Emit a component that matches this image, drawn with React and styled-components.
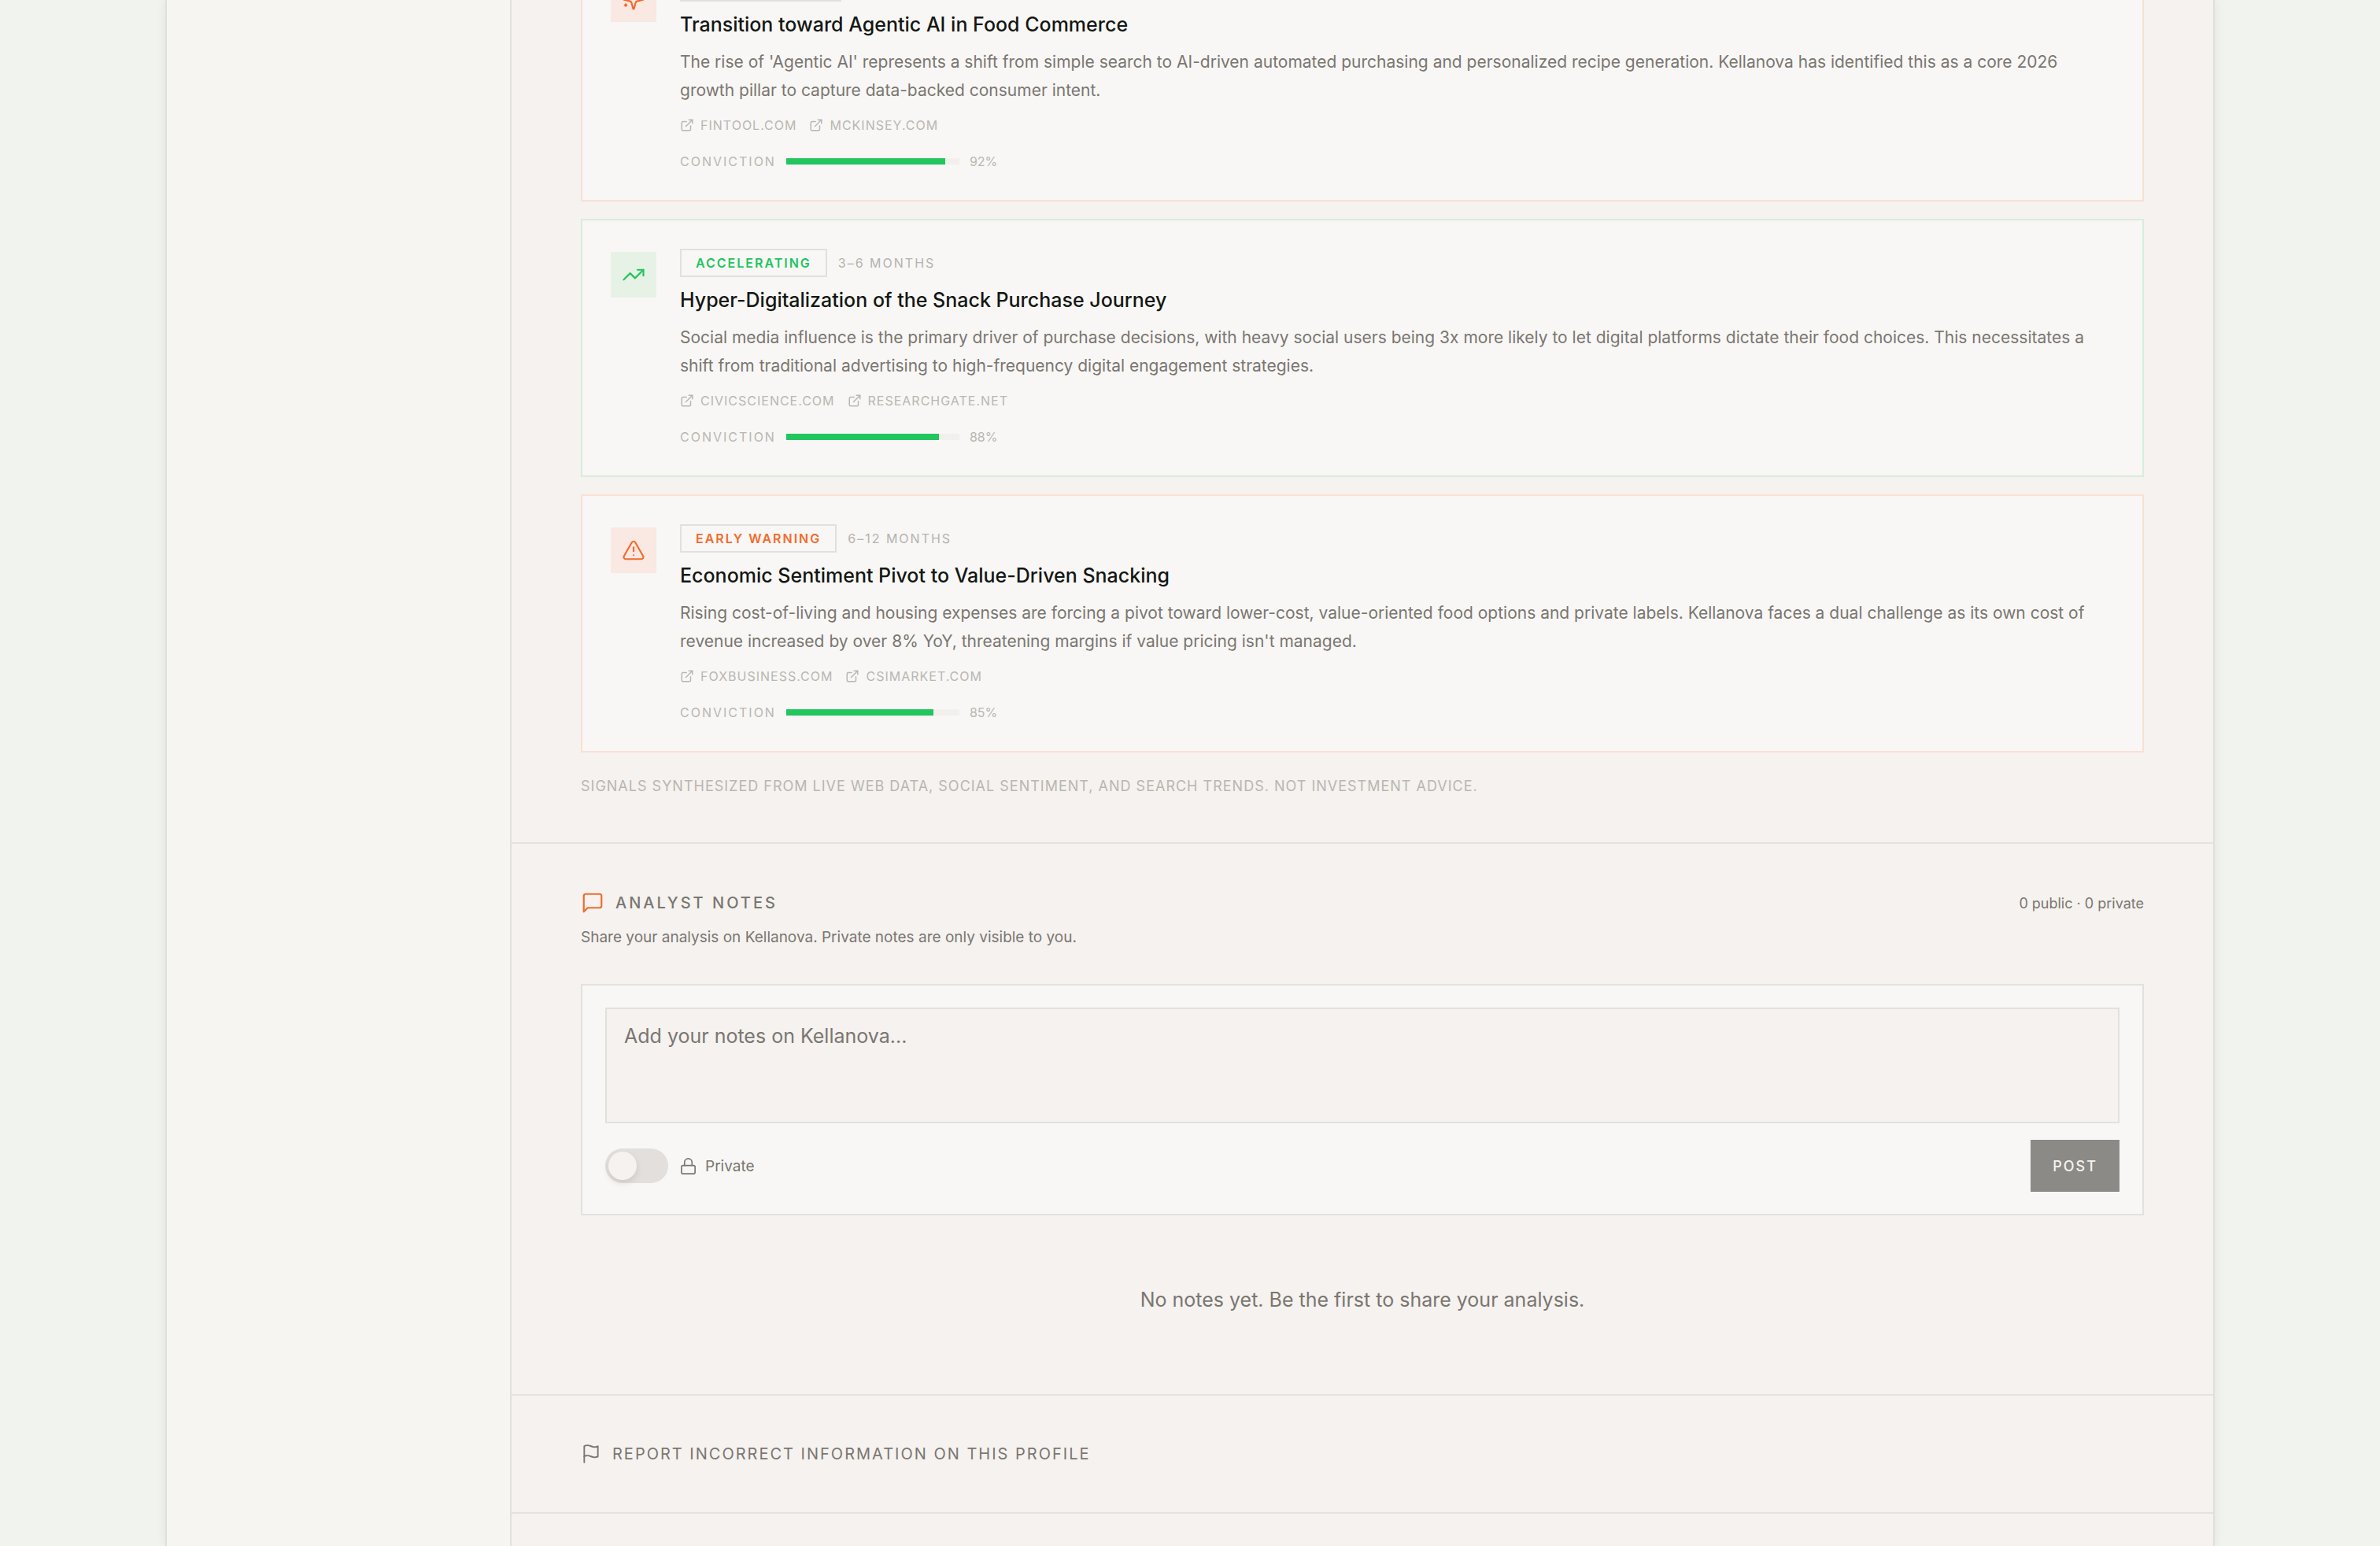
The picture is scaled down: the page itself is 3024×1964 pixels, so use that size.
import React, { useState } from 'react';
import styled, { createGlobalStyle } from 'styled-components';
import { TrendingUp, TriangleAlert, ExternalLink, Lock } from 'lucide-react';

const GlobalStyle = createGlobalStyle`
    *, *::before, *::after {
        box-sizing: border-box;
    }
    body {
        margin: 0;
        background: #f1f3ee;
        color: #141714;
        font-family: Inter, "Liberation Sans", sans-serif;
    }
    h2, h3, p {
        margin: 0;
        font-weight: 400;
    }
    button, textarea {
        font-family: inherit;
    }
`;

const Shell = styled.div`
    display: flex;
    max-width: 2604px;
    min-height: 100vh;
    margin: 0 auto;
    overflow: hidden;
    border: 0 solid #dfe0db;
    border-width: 0 2px;
    background: #f5f2ef;
    box-shadow: 0 0 12px rgba(40, 60, 40, 0.08);
`;

const Sidebar = styled.aside`
    flex: 0 0 438px;
    border-right: 2px solid #e3e1dd;
    background: #f6f5f1;
`;

const Main = styled.main`
    flex: 1;
    min-width: 0;
`;

const Section = styled.section`
    padding: 60px 88px;
    border-bottom: 2px solid #e4e1de;
`;

const Signals = styled(Section)`
    padding: 0 88px 58px;
    margin-top: -72px;
`;

const Report = styled(Section)`
    padding: 58px 88px;
`;

const SignalList = styled.div`
    display: flex;
    flex-direction: column;
    gap: 22px;
`;

const Card = styled.article`
    display: flex;
    gap: 30px;
    padding: 36px;
    border: 2px solid ${props => props.$green ? '#d8eddc' : '#f9e0d5'};
    background: #f8f7f5;
`;

const IconBox = styled.div`
    display: flex;
    align-items: center;
    justify-content: center;
    flex: none;
    width: 58px;
    height: 58px;
    margin-top: 4px;
    color: ${props => props.$green ? '#22c55e' : '#f26b2e'};
    background: ${props => props.$green ? '#e7f2e6' : '#f9e9e2'};
`;

const CardBody = styled.div`
    flex: 1;
    min-width: 0;
`;

const Meta = styled.div`
    display: flex;
    align-items: center;
    gap: 14px;
`;

const Badge = styled.span`
    min-width: ${props => props.children ? '0' : '205px'};
    height: 36px;
    padding: 0 18px;
    border: 2px solid #e2e0dd;
    line-height: 32px;
    font-size: 16px;
    font-weight: 600;
    letter-spacing: 2px;
    text-transform: uppercase;
    color: ${props => props.$green ? '#22c55e' : '#f26b2e'};
`;

const Horizon = styled.span`
    font-size: 16px;
    letter-spacing: 2px;
    text-transform: uppercase;
    color: #b5b2af;
`;

const CardTitle = styled.h3`
    margin: 10px 0 11px;
    line-height: 38px;
    font-size: 25px;
    font-weight: 500;
`;

const Summary = styled.p`
    padding-right: 12px;
    line-height: 36px;
    font-size: 21px;
    color: #7a7671;
`;

const Sources = styled.div`
    display: flex;
    gap: 16px;
    margin-top: 13px;
`;

const Source = styled.a`
    display: flex;
    align-items: center;
    gap: 8px;
    line-height: 26px;
    font-size: 16px;
    letter-spacing: 1px;
    text-transform: uppercase;
    text-decoration: none;
    color: #b9b6b3;
`;

const Conviction = styled.div`
    display: flex;
    align-items: center;
    gap: 13px;
    margin-top: 20px;
    line-height: 26px;
    font-size: 16px;
    color: #b9b6b3;
`;

const ConvictionLabel = styled.span`
    letter-spacing: 2px;
    text-transform: uppercase;
`;

const Track = styled.div`
    width: 220px;
    height: 8px;
    background: #f2efed;
`;

const Fill = styled.div`
    height: 8px;
    background: #22c55e;
`;

const Disclaimer = styled.p`
    margin-top: 30px;
    line-height: 26px;
    font-size: 18px;
    letter-spacing: 1px;
    text-transform: uppercase;
    color: #b9b6b2;
`;

const NotesHead = styled.div`
    display: flex;
    align-items: center;
    justify-content: space-between;
    color: #7a7671;
`;

const Heading = styled.h2`
    display: flex;
    align-items: center;
    gap: 14px;
    line-height: 30px;
    font-size: 20px;
    font-weight: 500;
    letter-spacing: 3px;
    text-transform: uppercase;
    svg {
        color: #f26b2e;
    }
`;

const Count = styled.span`
    font-size: 18px;
`;

const Intro = styled.p`
    margin: 14px 0 44px;
    line-height: 30px;
    font-size: 19px;
    color: #7a7671;
`;

const NoteForm = styled.form`
    padding: 28px 29px;
    border: 2px solid #e3e1de;
    background: #f8f7f5;
`;

const NoteInput = styled.textarea`
    display: block;
    width: 100%;
    height: 147px;
    padding: 14px 22px;
    border: 2px solid #e3e0dd;
    border-radius: 0;
    outline: none;
    resize: none;
    line-height: 40px;
    font-size: 25px;
    color: #141714;
    background: #f5f2ef;
    &::placeholder {
        color: #7a7671;
        opacity: 1;
    }
`;

const FormFoot = styled.div`
    display: flex;
    align-items: center;
    justify-content: space-between;
    margin-top: 21px;
`;

const PrivateLabel = styled.label`
    display: flex;
    align-items: center;
    gap: 10px;
    font-size: 19px;
    color: #7a7671;
`;

const Toggle = styled.input`
    appearance: none;
    width: 80px;
    height: 44px;
    margin: 0 4px 0 0;
    padding: 4px;
    border-radius: 22px;
    background: #e2dfdc;
    &::before {
        content: '';
        display: block;
        width: 36px;
        height: 36px;
        border-radius: 50%;
        background: #f5f2ef;
        box-shadow: 0 4px 10px rgba(0, 0, 0, 0.1);
    }
    &:checked {
        background: #f26b2e;
    }
    &:checked::before {
        margin-left: 36px;
    }
`;

const PostButton = styled.button`
    height: 66px;
    padding: 0 28px;
    border: 0;
    font-size: 18px;
    font-weight: 500;
    letter-spacing: 2px;
    text-transform: uppercase;
    color: #f4f3f1;
    background: #8c8a87;
`;

const Empty = styled.p`
    padding: 87px 0 40px;
    line-height: 40px;
    font-size: 25px;
    text-align: center;
    color: #7a7671;
`;

const ReportButton = styled.button`
    display: flex;
    align-items: center;
    gap: 14px;
    padding: 0;
    border: 0;
    line-height: 32px;
    font-size: 20px;
    letter-spacing: 2px;
    text-transform: uppercase;
    color: #7a7671;
    background: none;
`;

const LineIcon = ({ size, children }) => (
    <svg width={size} height={size} viewBox="0 0 24 24" fill="none" stroke="currentColor" strokeWidth="1.75" strokeLinecap="round" strokeLinejoin="round">
        {children}
    </svg>
);

const MessageIcon = () => (
    <LineIcon size={30}>
        <path d="M21 15a2 2 0 0 1-2 2H7l-4 4V5a2 2 0 0 1 2-2h14a2 2 0 0 1 2 2z" />
    </LineIcon>
);

const FlagIcon = () => (
    <LineIcon size={26}>
        <path d="M4 15s1-1 4-1 5 2 8 2 4-1 4-1V3s-1 1-4 1-5-2-8-2-4 1-4 1z" />
        <path d="M4 22v-7" />
    </LineIcon>
);

const SparklesIcon = ({ size }) => (
    <LineIcon size={size}>
        <path d="M9.937 15.5A2 2 0 0 0 8.5 14.063l-6.135-1.582a.5.5 0 0 1 0-.962L8.5 9.936A2 2 0 0 0 9.937 8.5l1.582-6.135a.5.5 0 0 1 .963 0L14.063 8.5A2 2 0 0 0 15.5 9.937l6.135 1.581a.5.5 0 0 1 0 .964L15.5 14.063a2 2 0 0 0-1.437 1.437l-1.582 6.135a.5.5 0 0 1-.963 0z" />
        <path d="M20 3v4" />
        <path d="M22 5h-4" />
        <path d="M4 17v2" />
        <path d="M5 18H3" />
    </LineIcon>
);

const signals = [
    {
        icon: SparklesIcon,
        title: 'Transition toward Agentic AI in Food Commerce',
        summary: "The rise of 'Agentic AI' represents a shift from simple search to AI-driven automated purchasing and personalized recipe generation. Kellanova has identified this as a core 2026 growth pillar to capture data-backed consumer intent.",
        sources: ['fintool.com', 'mckinsey.com'],
        conviction: 92,
    },
    {
        icon: TrendingUp,
        green: true,
        stage: 'Accelerating',
        horizon: '3–6 months',
        title: 'Hyper-Digitalization of the Snack Purchase Journey',
        summary: 'Social media influence is the primary driver of purchase decisions, with heavy social users being 3x more likely to let digital platforms dictate their food choices. This necessitates a shift from traditional advertising to high-frequency digital engagement strategies.',
        sources: ['civicscience.com', 'researchgate.net'],
        conviction: 88,
    },
    {
        icon: TriangleAlert,
        stage: 'Early Warning',
        horizon: '6–12 months',
        title: 'Economic Sentiment Pivot to Value-Driven Snacking',
        summary: "Rising cost-of-living and housing expenses are forcing a pivot toward lower-cost, value-oriented food options and private labels. Kellanova faces a dual challenge as its own cost of revenue increased by over 8% YoY, threatening margins if value pricing isn't managed.",
        sources: ['foxbusiness.com', 'csimarket.com'],
        conviction: 85,
    },
];

const SignalCard = ({ signal }) => {
    const { icon: Icon, green, stage, horizon, title, summary, sources, conviction } = signal;

    return (
        <Card $green={green}>
            <IconBox $green={green}>
                <Icon size={30} strokeWidth={1.75} />
            </IconBox>
            <CardBody>
                <Meta>
                    <Badge $green={green}>{stage}</Badge>
                    {horizon && <Horizon>{horizon}</Horizon>}
                </Meta>
                <CardTitle>{title}</CardTitle>
                <Summary>{summary}</Summary>
                <Sources>
                    {sources.map(source => (
                        <Source key={source} href={`https://${source}`}>
                            <ExternalLink size={18} strokeWidth={2} />
                            {source}
                        </Source>
                    ))}
                </Sources>
                <Conviction>
                    <ConvictionLabel>Conviction</ConvictionLabel>
                    <Track>
                        <Fill style={{ width: `${conviction}%` }} />
                    </Track>
                    <span>{conviction}%</span>
                </Conviction>
            </CardBody>
        </Card>
    );
};

const App = () => {
    const [note, setNote] = useState('');
    const [isPrivate, setIsPrivate] = useState(false);

    return (
        <>
            <GlobalStyle />
            <Shell>
                <Sidebar />
                <Main>
                    <Signals>
                        <SignalList>
                            {signals.map(signal => <SignalCard key={signal.title} signal={signal} />)}
                        </SignalList>
                        <Disclaimer>
                            Signals synthesized from live web data, social sentiment, and search trends. Not investment advice.
                        </Disclaimer>
                    </Signals>
                    <Section>
                        <NotesHead>
                            <Heading><MessageIcon />Analyst Notes</Heading>
                            <Count>0 public · 0 private</Count>
                        </NotesHead>
                        <Intro>Share your analysis on Kellanova. Private notes are only visible to you.</Intro>
                        <NoteForm onSubmit={e => e.preventDefault()}>
                            <NoteInput
                                aria-label="Your notes"
                                placeholder="Add your notes on Kellanova..."
                                value={note}
                                onChange={e => setNote(e.target.value)}
                            />
                            <FormFoot>
                                <PrivateLabel>
                                    <Toggle
                                        type="checkbox"
                                        role="switch"
                                        checked={isPrivate}
                                        onChange={e => setIsPrivate(e.target.checked)}
                                    />
                                    <Lock size={23} strokeWidth={1.75} />
                                    Private
                                </PrivateLabel>
                                <PostButton type="submit">Post</PostButton>
                            </FormFoot>
                        </NoteForm>
                        <Empty>No notes yet. Be the first to share your analysis.</Empty>
                    </Section>
                    <Report>
                        <ReportButton type="button">
                            <FlagIcon />
                            Report incorrect information on this profile
                        </ReportButton>
                    </Report>
                </Main>
            </Shell>
        </>
    );
};

export default App;
